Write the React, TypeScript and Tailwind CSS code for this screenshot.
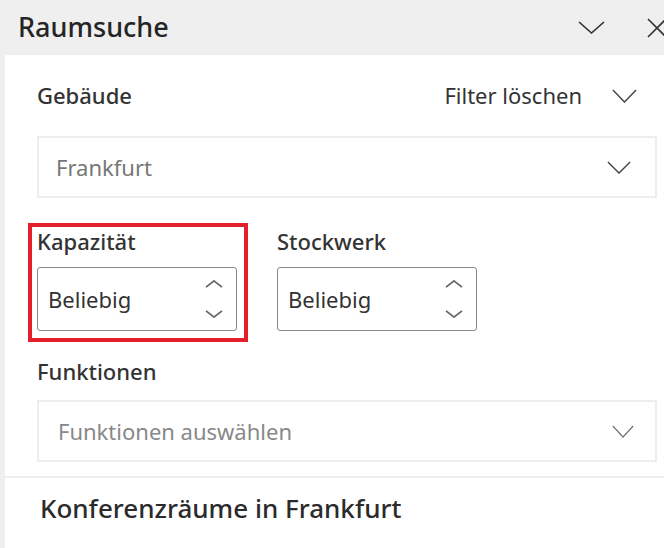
import React from "react";

const font = { fontFamily: '"Noto Sans", "Open Sans", sans-serif' };

const Chevron = ({ className = "" }: { className?: string }) => (
  <svg viewBox="0 0 26 14" className={className} fill="none" preserveAspectRatio="none">
    <polyline points="1,1 13,13 25,1" stroke="currentColor" strokeWidth="1.5" />
  </svg>
);

const Spinner = ({ value }: { value: string }) => (
  <div className="flex h-[64px] w-[200px] items-center justify-between rounded-[3px] border-[1.5px] border-[#888] pl-[10px] pr-[13px]">
    <span className="text-[22px] text-[#333]">{value}</span>
    <div className="flex flex-col gap-[22px] text-[#666]">
      <svg viewBox="0 0 18 9" className="h-[8px] w-[18px]" fill="none" preserveAspectRatio="none">
        <polyline points="1,8 9,1 17,8" stroke="currentColor" strokeWidth="1.8" />
      </svg>
      <svg viewBox="0 0 18 9" className="h-[8px] w-[18px]" fill="none" preserveAspectRatio="none">
        <polyline points="1,1 9,8 17,1" stroke="currentColor" strokeWidth="1.8" />
      </svg>
    </div>
  </div>
);

const App = () => {
  return (
    <div className="flex h-[548px] w-[664px] flex-col overflow-hidden bg-[#efefef] text-[#333]" style={font}>
      {/* header */}
      <div className="flex h-[55px] shrink-0 items-center justify-between pl-[18px]">
        <h1 className="text-[27px] font-medium text-[#252525]">Raumsuche</h1>
        <div className="flex items-center gap-[42px] text-[#333]">
          <Chevron className="h-[13px] w-[27px]" />
          <svg viewBox="0 0 20 20" className="-mr-[3px] h-[20px] w-[20px]" fill="none">
            <path d="M1 1 L19 19 M19 1 L1 19" stroke="currentColor" strokeWidth="1.6" />
          </svg>
        </div>
      </div>
      {/* panel */}
      <div className="ml-[5px] flex-1 bg-white">
        <div className="pl-[32px] pr-[7px]">
          <div className="flex h-[81px] items-center justify-between">
            <span className="text-[22px] font-medium">Gebäude</span>
            <div className="flex items-center gap-[30px] pr-[20px]">
              <span className="text-[22px]">Filter löschen</span>
              <Chevron className="h-[14px] w-[25px] text-[#444]" />
            </div>
          </div>
          <div className="flex h-[62px] items-center justify-between border-2 border-[#ededed] pl-[17px] pr-[24px]">
            <span className="text-[22px] text-[#777]">Frankfurt</span>
            <Chevron className="h-[13px] w-[24px] text-[#444]" />
          </div>
          <div className="mt-[28px] flex gap-[40px]">
            <div className="relative">
              <span className="pointer-events-none absolute -bottom-[11px] -left-[9px] -right-[11px] -top-[3px] border-[4px] border-[#e41f2b]" />
              <div className="text-[22px] font-medium leading-[30px]">Kapazität</div>
              <div className="mt-[11px]">
                <Spinner value="Beliebig" />
              </div>
            </div>
            <div>
              <div className="text-[22px] font-medium leading-[30px]">Stockwerk</div>
              <div className="mt-[11px]">
                <Spinner value="Beliebig" />
              </div>
            </div>
          </div>
          <div className="mt-[25px] text-[22px] font-medium leading-[30px]">Funktionen</div>
          <div className="mt-[14px] flex h-[62px] items-center justify-between border-2 border-[#ededed] pl-[19px] pr-[21px]">
            <span className="text-[22px] text-[#888]">Funktionen auswählen</span>
            <Chevron className="h-[13px] w-[22px] text-[#777]" />
          </div>
        </div>
        <div className="mt-[14px] h-[2px] bg-[#ededed]" />
        <div className="pl-[35px] pt-[12px] text-[26px] font-medium leading-[36px] text-[#2b2b2b]">Konferenzräume in Frankfurt</div>
      </div>
    </div>
  );
};

export default App;
